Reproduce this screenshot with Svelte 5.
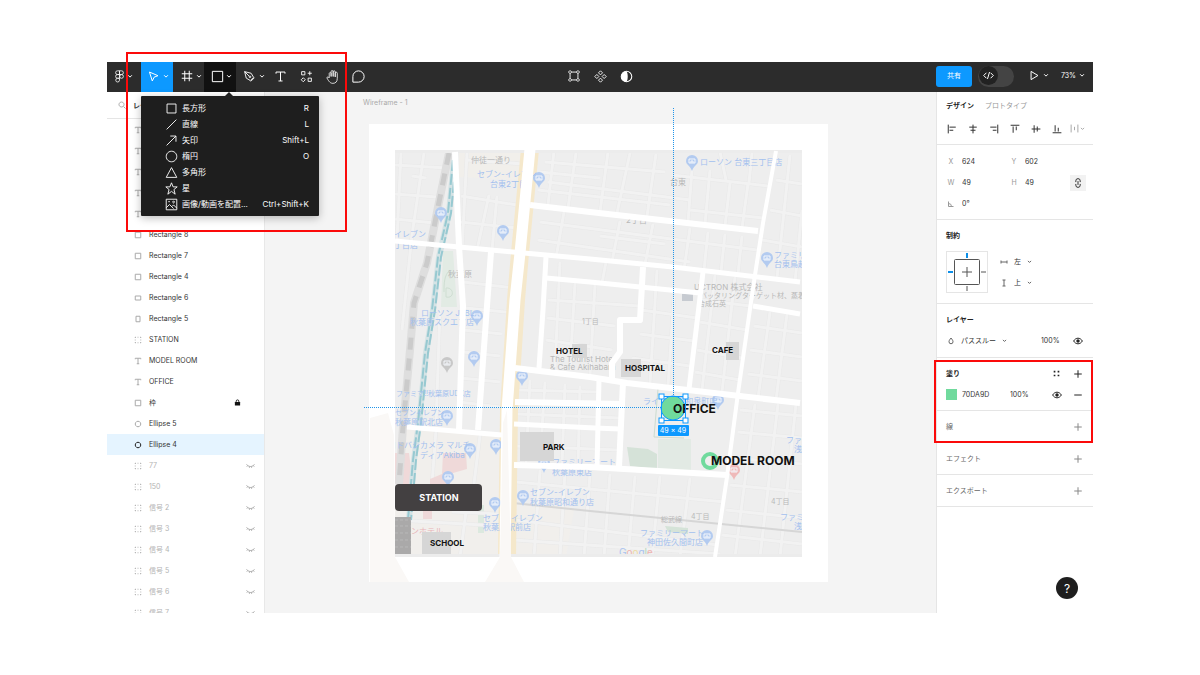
<svelte:options runes={true} />

<script lang='ts'>
	type Layer = { name: string; kind: string; locked?: boolean; hidden?: boolean };

	// 16x16 stroke icons
	const ICONS: Record<string, string> = {
		figma: 'M8 1H5.500a2.300 2.300 0 0 0 0 4.600H8zM8 1h2.500a2.300 2.300 0 0 1 0 4.600H8zM8 5.600H5.500a2.300 2.300 0 0 0 0 4.600H8zM10.500 5.600a2.300 2.300 0 1 1 0 4.600a2.300 2.300 0 0 1 0-4.600zM8 10.200H5.500a2.300 2.300 0 1 0 2.500 2.300z',
		move: 'M3 2.500l10.500 4.500-4.700 1.800L6.500 13.500z',
		frame: 'M5 1v14M11 1v14M1 5h14M1 11h14',
		rect: 'M2.500 2.500h11v11h-11z',
		pen: 'M2 2l8 2 3 5-4 4-5-3zM2 2l5.500 5.500M8.500 7.500a1 1 0 1 0 .1 0M9.500 14l4.500-4.500',
		text: 'M2.500 4.500v-2h11v2M8 2.500v11M5.500 13.500h5',
		resources: 'M2 2h4v4H2zM12 1.500v5M9.500 4h5M10 10h4v4h-4zM4 9.500l2.500 2.500L4 14.500 1.500 12z',
		hand: 'M4.500 9.500V4.500a1.100 1.100 0 0 1 2 0V8 2.800a1.100 1.100 0 0 1 2.200 0V8 3a1.100 1.100 0 0 1 2.200 0v5.500-4a1.100 1.100 0 0 1 2.200 0V10c0 3.500-1.700 5.300-4.700 5.300-2.600 0-4-1.500-6.400-5.800.2-1.500 1.700-1.200 2.500 0',
		comment: 'M8 2a6 6 0 1 1 0 12H2V8a6 6 0 0 1 6-6z',
		points: 'M5 3.500h6M5 12.500h6M3.500 5v6M12.500 5v6M3.500 2a1.500 1.500 0 1 0 .01 0M12.500 2a1.500 1.500 0 1 0 .01 0M3.500 11a1.500 1.500 0 1 0 .01 0M12.500 11a1.500 1.500 0 1 0 .01 0',
		component: 'M8 1l2.500 2.500L8 6 5.500 3.500zM8 10l2.500 2.500L8 15l-2.500-2.500zM3.500 5.500L6 8l-2.500 2.500L1 8zM12.500 5.500L15 8l-2.500 2.500L10 8z',
		line: 'M2 14L14 2',
		arrow: 'M2 14L13.500 2.500M6.500 2.500h7v7',
		ellipse: 'M8 1.500a6.500 6.500 0 1 0 .01 0',
		polygon: 'M8 2l6.500 12h-13z',
		star: 'M8 1l2 5h5l-4 3.300L12.500 15 8 11.500 3.500 15 5 9.300 1 6h5z',
		image: 'M1.500 1.500h13v13h-13zM1.500 12l4-4 5 5M8.500 10.500l2-2 4 4M10.500 4a1 1 0 1 0 .1 0M4 4.500h2',
		play: 'M3 2l10 6-10 6z',
		search: 'M7 2a5 5 0 1 0 .1 0M11 11l4 4',
		wide: 'M2.500 4h11v8h-11z',
		tall: 'M4 2.500h8v11H4z',
		circle: 'M8 2.500a5.500 5.500 0 1 0 .01 0',
		eye: 'M1 8c3.500-6 10.500-6 14 0-3.500 6-10.500 6-14 0z',
		closedEye: 'M1 6c3.500 5 10.500 5 14 0M3 8l-1.500 2M6.500 9.500L6 12M9.500 9.500l.5 2.500M13 8l1.500 2',
		plus: 'M8 2v12M2 8h12',
		minus: 'M2 8h12',
		alignLeft: 'M2 1v14M4 5h10M4 10h6',
		alignCenterH: 'M8 1v14M2 5h12M4 10h8',
		alignRight: 'M14 1v14M2 5h10M6 10h6',
		alignTop: 'M1 2h14M5 4v10M10 4v6',
		alignCenterV: 'M1 8h14M5 2v12M10 4v8',
		alignBottom: 'M1 14h14M5 2v10M10 6v6',
		spacing: 'M2 1v14M14 1v14M8 5v6',
		angle: 'M3 3v10h10M3 7a6 6 0 0 1 6 6',
		link: 'M4.500 6.500V4.500a3.500 3.500 0 0 1 7 0v2M4.500 9.500v2a3.500 3.500 0 0 0 7 0v-2M8 5v6',
		fixH: 'M2 5v6M14 5v6M2 8h12',
		fixV: 'M5 2h6M5 14h6M8 2v12',
		drop: 'M8 2c2 3 4 4.500 4 7.500a4 4 0 0 1-8 0C4 6.500 6 5 8 2z',
		code: 'M5 4L1 8l4 4M11 4l4 4-4 4M9.500 3l-3 10',
		chevron: 'M3 6l5 5 5-5',
	};

	const shapes = [
		{ icon: 'rect', label: '長方形', key: 'R' },
		{ icon: 'line', label: '直線', key: 'L' },
		{ icon: 'arrow', label: '矢印', key: 'Shift+L' },
		{ icon: 'ellipse', label: '楕円', key: 'O' },
		{ icon: 'polygon', label: '多角形', key: '' },
		{ icon: 'star', label: '星', key: '' },
		{ icon: 'image', label: '画像/動画を配置...', key: 'Ctrl+Shift+K' },
	];

	const layers: Layer[] = [
		{ name: 'PARK', kind: 'text' },
		{ name: 'CAFE', kind: 'text' },
		{ name: 'HOSPITAL', kind: 'text' },
		{ name: 'HOTEL', kind: 'text' },
		{ name: 'SCHOOL', kind: 'text' },
		{ name: 'Rectangle 8', kind: 'rect' },
		{ name: 'Rectangle 7', kind: 'rect' },
		{ name: 'Rectangle 4', kind: 'rect' },
		{ name: 'Rectangle 6', kind: 'wide' },
		{ name: 'Rectangle 5', kind: 'tall' },
		{ name: 'STATION', kind: 'group' },
		{ name: 'MODEL ROOM', kind: 'text' },
		{ name: 'OFFICE', kind: 'text' },
		{ name: '枠', kind: 'rect', locked: true },
		{ name: 'Ellipse 5', kind: 'circle' },
		{ name: 'Ellipse 4', kind: 'circle' },
		...['77', '150', '信号 2', '信号 3', '信号 4', '信号 5', '信号 6', '信号 7'].map(name => ({ name, kind: 'group', hidden: true })),
	];
	let selected = $state('Ellipse 4');

	const aligns = ['alignLeft', 'alignCenterH', 'alignRight', 'alignTop', 'alignCenterV', 'alignBottom'];

	// Map roads, [stroke width, points]
	const roads: [number, string][] = [
		[6, '455,152 459,246 463,306 459,430'],
		[11, '530,149 520,253 515,300 507,410 505,557'],
		[5, '395,241 513,252 590,259 673,267 800,282'],
		[6, '530,205 590,212 758,231'],
		[4, '776,151 763,223 755,275 751,302 738,393 727,477 715,557'],
		[6, '491,252 487,306 478,430'],
		[5, '407,427 502,435'],
		[5, '546,257 543,310 539,368'],
		[5, '546,278 590,282 700,293'],
		[6, '643,267 640,320 620,320 620,352 612,363 612,380'],
		[5, '703,272 699,306 689,389'],
		[6, '515,368 590,377 627,383 800,403'],
		[6, '515,402 623,404'],
		[5, '514,424 595,428 620,429'],
		[6, '514,465 590,467 727,475'],
		[5, '599,380 597,467'],
		[6, '623,382 619,467'],
		[5, '753,306 800,314'],
	];

	const lanes = [
		'401,153 397,240', '424,153 412,235 402,330', '395,165 447,168', '395,194 436,197', '395,219 434,223', '412,176 426,178',
		'467,153 462,250', '489,195 477,250', '461,196 523,206', '460,222 517,228', '497,196 492,250', '467,160 524,164',
		'554,151 548,205', '540,172 600,178', '538,190 670,205', '576,153 568,208', '608,152 600,212', '545,162 665,172', '548,182 690,200', '630,153 617,213', '656,154 647,216',
		'692,170 688,222', '672,175 768,186', '710,170 705,224', '730,183 725,226', '748,184 742,228', '690,210 763,218', '720,152 726,180', '752,153 749,183',
		'540,222 757,250', '538,240 690,262', '564,212 556,258', '620,221 612,262', '653,224 645,264', '690,228 684,270', '708,232 704,270', '725,234 721,272', '742,236 738,274', '600,236 665,244',
		'776,180 802,184', '770,210 802,216', '762,240 802,247', '790,155 777,278', '802,210 795,282', '760,285 752,300',
		'560,262 555,367', '575,283 570,370', '595,284 590,376', '548,300 640,306', '547,318 615,326', '546,340 612,350', '606,262 602,283',
		'657,270 650,384', '674,296 668,386', '641,310 697,318', '640,334 694,341', '632,358 690,366',
		'715,275 702,390', '735,277 722,392', '702,300 750,306', '700,322 747,330', '697,350 742,358', '695,372 740,380',
		'770,312 758,398', '787,314 776,400', '754,326 802,333', '750,350 802,357', '748,374 802,381',
		'530,380 526,464', '545,382 540,463', '565,384 562,465', '580,386 578,466', '517,390 598,392', '517,414 620,418', '515,446 618,450',
		'740,410 802,416', '738,432 802,438', '733,458 802,464', '730,485 802,492', '726,510 802,518', '722,535 802,544', '755,404 735,557', '778,404 760,557', '796,404 780,557',
		'516,482 725,502', '515,520 718,545', '514,540 720,554', '540,470 534,557', '565,472 560,557', '590,474 584,557', '610,474 604,557', '635,476 628,557', '660,476 652,557', '690,478 680,557',
		'436,430 432,484', '480,435 474,484', '395,520 500,526', '452,512 500,514', '466,512 460,557', '440,310 436,425', '463,330 502,334', '463,352 500,356', '461,378 500,382', '459,402 500,407', '463,282 514,288', '466,308 514,313',
	];

	const pins: [number, number, string][] = [
		[539, 178, 'blue'], [441, 213, 'blue'], [503, 231, 'blue'], [692, 161, 'blue'], [767, 258, 'blue'], [477, 316, 'blue'],
		[474, 357, 'blue'], [447, 363, 'gray'], [522, 376, 'blue'], [447, 416, 'blue'], [470, 449, 'blue'], [496, 445, 'blue'],
		[448, 477, 'blue'], [495, 503, 'blue'], [523, 496, 'blue'], [544, 463, 'blue'], [718, 400, 'blue'], [707, 536, 'blue'], [734, 470, 'pink'],
	];

	// [x, baseline, text, tone]
	const places: [number, number, string, string][] = [
		[471, 163, '仲徒一通り', 'gray'], [477, 177, 'セブン-イレブン', 'blue'], [490, 187, '台東2丁目', 'blue'],
		[394, 237, 'イレブン', 'blue'], [394, 248, '丁目店', 'blue'], [448, 277, '秋葉原', 'gray'],
		[700, 165, 'ローソン 台東三丁目店', 'blue'], [670, 185, '台東', 'gray'], [626, 223, '2丁目', 'gray'],
		[774, 258, 'ファミリーマート', 'blue'], [774, 267, '台東鳥越店', 'blue'],
		[694, 290, 'UCTRON 株式会社', 'gray'], [700, 298, 'バッタリングターゲット材、蒸着材料', 'gray small'], [698, 306, '合成石英', 'gray small'],
		[421, 316, 'ローソン JEBL', 'blue'], [410, 325, '秋葉原スクエア店', 'blue'], [582, 324, '1丁目', 'gray small'],
		[550, 362, 'The Tourist Hotel', 'gray'], [550, 370, '& Cafe Akihabara', 'gray'],
		[396, 396, 'ファミマ!!秋葉原UDX店', 'blue small'], [395, 415, 'セブンイレブン', 'blue small'], [395, 425, '秋葉原駅北店', 'blue'],
		[388, 448, 'ヨドバシカメラ マルチ', 'blue'], [420, 458, 'ディアAkiba', 'blue'],
		[643, 404, 'ライフ 神田和泉町店', 'blue'], [552, 465, 'ファミリーマート', 'blue'], [552, 475, '秋葉原東店', 'blue'],
		[530, 495, 'セブン-イレブン', 'blue'], [530, 505, '秋葉原昭和通り店', 'blue'],
		[483, 521, 'セブン-イレブン', 'blue'], [483, 530, '秋葉原駅前店', 'blue'], [411, 534, 'ンホテル', 'pink'],
		[786, 443, 'ファミ', 'blue'], [794, 452, '浅草', 'blue'], [771, 504, '4丁目', 'gray small'], [691, 519, '4丁目', 'gray small'], [661, 522, '総武線', 'gray small'],
		[640, 536, 'ファミリーマート', 'blue'], [647, 545, '神田佐久間町店', 'blue'], [780, 520, 'ファミリー', 'blue'], [794, 529, '浅草', 'blue'],
	];

	const blocks = [
		[572, 344, 15, 14], [621, 359, 20, 18], [726, 342, 13, 18], [520, 432, 34, 29], [422, 532, 29, 22],
	];

	const landmarks: [number, number, string][] = [
		[556, 354, 'HOTEL'], [625, 371, 'HOSPITAL'], [712, 353, 'CAFE'], [543, 450, 'PARK'], [430, 546, 'SCHOOL'],
	];

	const handles = [[661, 396], [685, 396], [661, 420], [685, 420]];
</script>

{#snippet icon(name: string, size = 12, weight = 1)}
	<svg class='icon' width={size} height={size} viewBox='0 0 16 16' aria-hidden='true'>
		{#if name === 'contrast'}
			<circle cx='8' cy='8' r='6.500' stroke-width='1.300' />
			<path class='solid' d='M8 1.500a6.500 6.500 0 0 0 0 13c2-3 2-10 0-13z' />
		{:else if name === 'group'}
			<path d='M2 2.500h12M2 13.500h12M2.500 2v12M13.500 2v12' stroke-dasharray='2 3' stroke-width='1.600' />
		{:else if name === 'lock'}
			<rect class='solid' x='2' y='7' width='12' height='8' rx='1' />
			<path d='M5 8V5a3 3 0 0 1 6 0v3' stroke-width='2' />
		{:else if name === 'styles'}
			<path class='solid' d='M3 3h3v3H3zM10 3h3v3h-3zM3 10h3v3H3zM10 10h3v3h-3z' />
		{:else}
			<path d={ICONS[name]} stroke-width={weight * 16 / size} />
			{#if name === 'eye'}
				<circle class='solid' cx='8' cy='8' r='2.800' />
			{/if}
		{/if}
	</svg>
{/snippet}

<div class='page'>
	<div class='editor'>
		<header class='toolbar'>
			<div class='tools'>
				<button class='main' type='button' aria-label='Menu'>{@render icon('figma', 13, 0.8)}{@render icon('chevron', 6)}</button>
				<button class='tool active' type='button' aria-label='Move'>{@render icon('move', 13)}{@render icon('chevron', 6)}</button>
				<button class='tool narrow' type='button' aria-label='Frame'>{@render icon('frame', 12)}{@render icon('chevron', 6)}</button>
				<div class='shape'>
					<button class='tool open' type='button' aria-label='Shape' aria-expanded='true'>{@render icon('rect', 15)}{@render icon('chevron', 6)}</button>
					<ul class='menu'>
						{#each shapes as s}
							<li>
								<button type='button'>{@render icon(s.icon, 13, 0.9)}<span>{s.label}</span><kbd>{s.key}</kbd></button>
							</li>
						{/each}
					</ul>
				</div>
				<button class='tool narrow' type='button' aria-label='Pen'>{@render icon('pen', 13, 0.9)}{@render icon('chevron', 6)}</button>
				<button class='single' type='button' aria-label='Text'>{@render icon('text', 13)}</button>
				<button class='single' type='button' aria-label='Resources'>{@render icon('resources', 13, 0.9)}</button>
				<button class='single' type='button' aria-label='Hand'>{@render icon('hand', 15, 0.8)}</button>
				<button class='single' type='button' aria-label='Comment'>{@render icon('comment', 15)}</button>
			</div>
			<div class='actions'>
				<button class='single' type='button' aria-label='Edit object'>{@render icon('points', 14, 0.9)}</button>
				<button class='single' type='button' aria-label='Create component'>{@render icon('component', 13, 0.9)}</button>
				<button class='single' type='button' aria-label='Mask'>{@render icon('contrast', 13)}</button>
			</div>
			<div class='session'>
				<button class='share' type='button'>共有</button>
				<button class='dev' type='button' aria-label='Dev mode'><span>{@render icon('code', 11)}</span></button>
				<button class='present' type='button' aria-label='Present'>{@render icon('play', 11)}{@render icon('chevron', 6)}</button>
				<button class='zoom' type='button'>73%{@render icon('chevron', 6)}</button>
			</div>
		</header>

		<aside class='layers'>
			<div class='layers-head'>{@render icon('search', 8)}<b>レイヤー</b></div>
			<ul>
				{#each layers as layer}
					<li>
						<button
							class='layer'
							class:selected={layer.name === selected}
							class:dim={layer.hidden}
							onclick={() => (selected = layer.name)}
							type='button'
						>
							{@render icon(layer.kind, 8)}
							<span>{layer.name}</span>
							{#if layer.locked}<i class='lock'>{@render icon('lock', 7)}</i>{/if}
							{#if layer.hidden}<i>{@render icon('closedEye', 9)}</i>{/if}
						</button>
					</li>
				{/each}
			</ul>
		</aside>

		<main class='canvas'>
			<svg class='board' viewBox='265 92 671 521' role='img' aria-label='Wireframe - 1'>
				<defs>
					<clipPath id='map-clip'><rect x='395' y='150' width='407' height='407' /></clipPath>
				</defs>
				<text class='frame-name' x='363' y='105'>Wireframe - 1</text>
				<rect x='369' y='124' width='459' height='458' fill='#fff' />
				<g clip-path='url(#map-clip)'>
					<rect x='395' y='150' width='407' height='407' fill='#eeeeee' />
					<path d='M459 153h65l-4 27-61-3z' fill='#f1efeb' />
					<path d='M405 428l98 8v121H395v-60z' fill='#f1efec' />
					<path d='M514 503l60 7-8 47h-54z' fill='#f1efec' />
					<path d='M443 251h10l4 56h-16z' fill='#e2ebe4' />
					<path d='M478 505h6v28h-6z' fill='#dce9df' />
					<g class='lane-edge'>
						{#each lanes as points}<polyline {points} />{/each}
					</g>
					<g class='lane'>
						{#each lanes as points}<polyline {points} />{/each}
					</g>
					<path d='M658 439h33v31h-33z' fill='#e2eae4' />
					<path d='M627 447l21 2 9 5v15l-27-3z' fill='#d5e2d8' />
					<path d='M665 526l23 2v6l-20-2z' fill='#d5e3d8' />
					<path d='M395 453h14l4 31h-18zM443 453h23l1 16-14 4-4 12h-19v-6l12-5zM423 511h9v8h-9z' fill='#efd9d9' />
					<path class='rail' d='M449 153l-11 54-11 56-13 40-4 47-7 77-4 57' />
					<path class='rail-ties' d='M449 153l-11 54-11 56-13 40-4 47-7 77-4 57' />
					<path class='water' d='M454 160l-5 53-10 44-6 53-7 43-7 70-5 37-5 60' />
					<path class='water-dash' d='M453 160l-5 53-10 44-6 53-7 43-7 70-5 37-5 60' />
					<path class='water-dash' stroke-dashoffset='6' d='M456 160l-5 53-10 44-6 53-7 43-7 70-5 37-5 60' />
					<path d='M658 389l-4 48 30 1' fill='none' stroke='#ccdcd0' />
					<path d='M450 270c-6 5-6 14-6 22m2 5c9 2 8-10 0-9z' fill='none' stroke='#cfded2' />
					<path d='M513 503l77 8 212 21' fill='none' stroke='#d6d6d6' stroke-width='2' />
					<path class='avenue' d='M530 149l-10 104-4 47-7 110-2 147' />
					{#each pins as [x, y, tone]}
						<g class='pin {tone}' transform='translate({x} {y})'>
							<path d='M0-6a6 6 0 0 1 6 6c0 4-4 4-6 10-2-6-6-6-6-10a6 6 0 0 1 6-6z' />
							<path class='mark' d='M-3-2h6v4h-6zM-1 2v-2h2v2' />
						</g>
					{/each}
					<path d='M682 294h11v7h-11z' fill='#c7cbd1' />
					{#each places as [x, y, label, tone]}
						<text class='place {tone}' {x} {y}>{label}</text>
					{/each}
					<text class='google' x='619' y='556'><tspan fill='#a9c3ef'>G</tspan><tspan fill='#eeb3b0'>o</tspan><tspan fill='#eedba3'>o</tspan><tspan fill='#a9c3ef'>g</tspan><tspan fill='#b4d8bd'>l</tspan><tspan fill='#eeb3b0'>e</tspan></text>
					<path d='M395 150h407v3H395zM395 554h407v3H395z' fill='#ececec' />
					<rect x='395' y='517' width='16' height='37' fill='#aaa9a9' />
					<path d='M395 520h16M395 526h16M395 533h16M395 540h16M395 547h16' stroke='#b8b8b8' stroke-dasharray='3 2' />
					{#each blocks as [x, y, width, height]}
						<rect {x} {y} {width} {height} fill='#d6d6d6' />
					{/each}
				</g>
				{#each roads as [weight, points]}
					<polyline class='road' {points} stroke-width={weight} />
				{/each}
				<path d='M370 418l18-5 6 22 1 122 14 25h-39zM485 582l15-25 3-134 4-13 4 147 13 25z' fill='#faf8f6' />
				{#each landmarks as [x, y, label]}
					<text class='landmark' {x} {y}>{label}</text>
				{/each}
				<rect x='395' y='484' width='87' height='27' rx='4' fill='#434041' />
				<text class='station' x='439' y='501'>STATION</text>
				<circle cx='710' cy='461' r='7' fill='none' stroke='#70da9d' stroke-width='4' />
				<text class='title' x='711' y='465'>MODEL ROOM</text>

				<path class='guide' d='M673.500 108v288M364 407.500h297' />
				<circle cx='673' cy='408' r='12' fill='#70da9d' stroke='#0d99ff' />
				<text class='title' x='673' y='413'>OFFICE</text>
				<rect x='661.500' y='396.500' width='24' height='24' fill='none' stroke='#0d99ff' />
				{#each handles as [x, y]}
					<rect x={x - 2} y={y - 2} width='5' height='5' fill='#fff' stroke='#0d99ff' />
				{/each}
				<rect x='658' y='425' width='31' height='11' rx='1' fill='#0d99ff' />
				<text class='size' x='673' y='433'>49 × 49</text>
			</svg>
		</main>

		<aside class='inspector'>
			<section class='top'>
				<nav class='tabs'>
					<button class='current' type='button'>デザイン</button>
					<button type='button'>プロトタイプ</button>
				</nav>
				<div class='aligns'>
					{#each aligns as name}
						<button aria-label={name} type='button'>{@render icon(name, 10)}</button>
					{/each}
					<button class='faint' aria-label='Tidy up' type='button'>{@render icon('spacing', 9)}{@render icon('chevron', 5)}</button>
				</div>
			</section>

			<section class='transform'>
				<label><span>X</span><input value='624' /></label>
				<label><span>Y</span><input value='602' /></label>
				<label><span>W</span><input value='49' /></label>
				<label><span>H</span><input value='49' /></label>
				<button class='link' aria-label='Constrain proportions' type='button'>{@render icon('link', 10)}</button>
				<label><span>{@render icon('angle', 8)}</span><input aria-label='Rotation' value='0°' /></label>
			</section>

			<section>
				<h2>制約</h2>
				<div class='constraints'>
					<svg width='42' height='42' viewBox='0 0 42 42' aria-hidden='true'>
						<rect x='.5' y='.5' width='41' height='41' fill='#fff' stroke='#e5e5e5' />
						<rect x='8.500' y='8.500' width='25' height='25' rx='1' fill='none' stroke='#555' />
						<path d='M21 16v10M16 21h10M21 35v5M35 21h5' stroke='#555' />
						<path d='M21 2v5M2 21h5' stroke='#0d8fe8' stroke-width='2' />
					</svg>
					<div>
						<label>{@render icon('fixH', 8)}<select aria-label='Horizontal'><option>左</option></select>{@render icon('chevron', 5)}</label>
						<label>{@render icon('fixV', 8)}<select aria-label='Vertical'><option>上</option></select>{@render icon('chevron', 5)}</label>
					</div>
				</div>
			</section>

			<section class='blending'>
				<h2>レイヤー</h2>
				<div class='row'>
					<label class='blend'>{@render icon('drop', 8)}<select aria-label='Blend mode'><option>パススルー</option></select>{@render icon('chevron', 5)}</label>
					<input class='percent' aria-label='Layer opacity' value='100%' />
					<button aria-label='Visible' type='button'>{@render icon('eye', 10)}</button>
				</div>
			</section>

			<div class='marked'>
				<section>
					<div class='row'>
						<h2>塗り</h2>
						<button aria-label='Styles' type='button'>{@render icon('styles', 9)}</button>
						<button aria-label='Add fill' type='button'>{@render icon('plus', 10)}</button>
					</div>
					<div class='row'>
						<label class='color'><i></i><input aria-label='Fill colour' value='70DA9D' /></label>
						<input class='percent' aria-label='Fill opacity' value='100%' />
						<button aria-label='Visible' type='button'>{@render icon('eye', 10)}</button>
						<button aria-label='Remove fill' type='button'>{@render icon('minus', 10)}</button>
					</div>
				</section>
				<section class='muted'>
					<div class='row'><h2>線</h2><button aria-label='Add stroke' type='button'>{@render icon('plus', 10)}</button></div>
				</section>
				<div class='callout'></div>
			</div>
			{#each ['エフェクト', 'エクスポート'] as name}
				<section class='muted'>
					<div class='row'><h2>{name}</h2><button aria-label={name} type='button'>{@render icon('plus', 10)}</button></div>
				</section>
			{/each}
			<button class='help' type='button'>?</button>
		</aside>

		<div class='callout tools-callout'></div>
	</div>
</div>

<style>
	:global(body) {
		background: #fff;
	}
	.page {
		padding: 62px 107px;
		font: 7px/21px Inter, 'Noto Sans CJK JP', sans-serif;
		color: #333;
	}
	.page button, .page input, .page select {
		box-sizing: border-box;
		margin: 0;
		padding: 0;
		border: 0;
		background: none;
		font: inherit;
		color: inherit;
		min-width: 0;
	}
	.page button {
		display: flex;
		align-items: center;
		justify-content: center;
	}
	ul {
		list-style: none;
		margin: 0;
		padding: 0;
	}
	.icon {
		flex: none;
		fill: none;
		stroke: currentColor;
	}
	.icon .solid {
		fill: currentColor;
		stroke: none;
	}
	.editor {
		position: relative;
		display: grid;
		grid-template-columns: 158px 1fr 157px;
		grid-template-rows: 30px auto;
	}
	.callout {
		position: absolute;
		border: 2px solid #fb0a0a;
		pointer-events: none;
		box-sizing: border-box;
	}
	.tools-callout {
		left: 19px;
		top: -10px;
		width: 221px;
		height: 180px;
		z-index: 3;
	}

	/* toolbar */
	.toolbar {
		grid-column: 1 / -1;
		display: grid;
		grid-template-columns: 1fr auto 1fr;
		background: #2c2c2c;
		color: #fff;
	}
	.tools, .actions, .session {
		display: flex;
	}
	.toolbar button {
		padding-bottom: 2px;
	}
	.page .main {
		width: 34px;
		gap: 1px;
		padding-right: 3px;
	}
	.page .tool {
		width: 32px;
		height: 100%;
		gap: 3px;
		padding: 0 0 2px 2px;
	}
	.page .narrow {
		width: 31px;
		padding-left: 5px;
	}
	.page .active {
		background: #0d99ff;
	}
	.page .open {
		gap: 1px;
		background: #111;
	}
	.page .single {
		width: 26px;
		padding-bottom: 2px;
	}
	.shape {
		position: relative;
	}
	.menu {
		position: absolute;
		z-index: 2;
		top: 34px;
		left: -63px;
		width: 178px;
		padding: 4px 0;
		background: #1e1e1e;
		border-radius: 1px;
		box-shadow: 0 2px 8px #0004;
		font-size: 8px;
		line-height: 16px;
	}
	.menu::before {
		content: '';
		position: absolute;
		top: -4px;
		left: 84px;
		border: 4px solid transparent;
		border-top: 0;
		border-bottom-color: #1e1e1e;
	}
	.page .menu button {
		width: 100%;
		height: 16px;
		padding: 0 10px 0 24px;
		gap: 4px;
	}
	.menu kbd {
		font: inherit;
		margin-left: auto;
	}
	.session {
		align-items: center;
		justify-content: flex-end;
		padding: 0 8px 2px 0;
	}
	.page .share {
		width: 36px;
		height: 21px;
		border-radius: 3px;
		background: #0d99ff;
	}
	.page .dev {
		width: 36px;
		height: 21px;
		margin: 0 15px 0 6px;
		border-radius: 11px;
		background: #444;
		justify-content: flex-start;
	}
	.dev span {
		display: grid;
		place-items: center;
		width: 19px;
		height: 19px;
		margin-left: 1px;
		border-radius: 10px;
		background: #222;
	}
	.page .present {
		gap: 3px;
		margin-right: 12px;
	}
	.page .zoom {
		gap: 3px;
	}

	/* layers */
	.layers {
		contain: size;
		overflow: hidden;
		background: #fff;
		border-right: 1px solid #e8e8e8;
	}
	.layers-head {
		display: flex;
		align-items: center;
		gap: 7px;
		height: 26px;
		padding-left: 11px;
		border-bottom: 1px solid #e5e5e5;
	}
	.layers-head .icon {
		color: #aaa;
	}
	.page .layer {
		width: 100%;
		height: 21px;
		padding: 0 9px 0 27px;
		gap: 7px;
		justify-content: flex-start;
	}
	.layer .icon {
		color: #aaa;
	}
	.page .selected {
		background: #e5f4ff;
	}
	.selected .icon {
		color: #222;
	}
	.page .dim {
		color: #b3b3b3;
	}
	.layer i {
		display: flex;
		margin-left: auto;
	}
	.layer .lock {
		margin-right: 14px;
	}
	.lock .icon {
		color: #111;
	}

	/* canvas */
	.canvas {
		background: #f4f4f4;
	}
	.board {
		display: block;
		width: 100%;
		height: auto;
	}
	.frame-name {
		fill: #aaa;
	}
	.road, .lane, .lane-edge {
		fill: none;
		stroke: #fff;
		stroke-linejoin: round;
	}
	.lane-edge {
		stroke: #e8e8e8;
		stroke-width: 4;
	}
	.lane {
		stroke: #f2f2f2;
		stroke-width: 3;
	}
	.rail, .rail-ties, .water, .water-dash, .avenue {
		fill: none;
	}
	.rail {
		stroke: #dedede;
		stroke-width: 8;
	}
	.rail-ties {
		stroke: #cbcbcb;
		stroke-width: 5;
		stroke-dasharray: 12 9;
	}
	.water {
		stroke: #d5e3e5;
		stroke-width: 6;
	}
	.water-dash {
		stroke: #97c9d1;
		stroke-width: 2;
		stroke-dasharray: 11 3;
	}
	.avenue {
		stroke: #f5e8cb;
		stroke-width: 18;
	}
	.pin {
		fill: #b3cbf0;
	}
	.pin.gray {
		fill: #c8c8c8;
	}
	.pin.pink {
		fill: #efb9b9;
	}
	.pin .mark {
		fill: none;
		stroke: #f4f7fc;
	}
	.place {
		font-size: 8px;
		fill: #a3c0ee;
	}
	.place.gray {
		fill: #b8b8b8;
	}
	.place.pink {
		fill: #e8b4b8;
	}
	.place.small {
		font-size: 7px;
	}
	.google {
		font-size: 10px;
	}
	.landmark {
		font-size: 8px;
		font-weight: 700;
		fill: #111;
	}
	.station {
		font-size: 9px;
		font-weight: 700;
		fill: #fff;
		text-anchor: middle;
	}
	.title {
		font-size: 12px;
		font-weight: 700;
		fill: #111;
	}
	.guide {
		fill: none;
		stroke: #1f94ea;
		stroke-dasharray: 1 1;
	}
	.size {
		fill: #fff;
		text-anchor: middle;
	}

	/* inspector */
	.inspector {
		position: relative;
		background: #fff;
		border-left: 1px solid #e5e5e5;
	}
	section {
		padding: 5px 5px 5px 9px;
		border-bottom: 1px solid #e5e5e5;
	}
	section.top {
		padding-top: 0;
	}
	h2 {
		margin: 0;
		font-size: 7px;
		font-weight: 700;
		line-height: 21px;
		color: #222;
	}
	.muted h2 {
		font-weight: 400;
		color: #666;
	}
	.tabs {
		display: flex;
		gap: 11px;
		height: 26px;
		color: #999;
	}
	.page .tabs .current {
		font-weight: 700;
		color: #222;
	}
	.aligns {
		display: flex;
		margin-left: -5px;
	}
	.page .aligns button {
		width: 21px;
		height: 21px;
	}
	.page .aligns .faint {
		color: #aaa;
		gap: 1px;
	}
	.transform {
		display: grid;
		grid-template-columns: 63px 51px 1fr;
		padding-top: 6px;
	}
	.transform label {
		display: flex;
		grid-column: 1;
		height: 21px;
	}
	.transform label:nth-of-type(even) {
		grid-column: 2;
	}
	.transform span {
		display: flex;
		align-items: center;
		justify-content: center;
		flex: none;
		width: 10px;
		margin-right: 6px;
		color: #999;
	}
	.transform input {
		width: 100%;
	}
	.page .link {
		align-self: center;
		justify-self: end;
		width: 16px;
		height: 16px;
		margin-right: 2px;
		background: #f2f2f2;
	}
	.constraints {
		display: flex;
		gap: 12px;
		padding: 5px 0;
	}
	.constraints label, .blend {
		display: flex;
		align-items: center;
		gap: 6px;
		height: 21px;
		color: #666;
	}
	.page select {
		appearance: none;
		color: #333;
	}
	.blending {
		padding-bottom: 6px;
	}
	.row {
		display: flex;
		align-items: center;
		height: 21px;
	}
	.row h2 {
		flex: 1;
	}
	.page .row button {
		width: 21px;
		height: 21px;
		color: #222;
	}
	.page .muted button {
		color: #888;
	}
	.blend {
		flex: 1;
		padding-left: 1px;
	}
	.page .percent {
		width: 26px;
	}
	.color {
		display: flex;
		align-items: center;
		flex: 1;
	}
	.color i {
		flex: none;
		width: 11px;
		height: 11px;
		margin-right: 5px;
		background: #70da9d;
	}
	.page .color input {
		width: 40px;
	}
	.color + .percent {
		margin-right: 10px;
	}
	.marked {
		position: relative;
	}
	.marked .callout {
		inset: 2px 0 0 -3px;
	}
	.page .help {
		position: absolute;
		right: 15px;
		bottom: 14px;
		width: 22px;
		height: 22px;
		border-radius: 11px;
		background: #1e1e1e;
		color: #fff;
		font-size: 12px;
	}
</style>
